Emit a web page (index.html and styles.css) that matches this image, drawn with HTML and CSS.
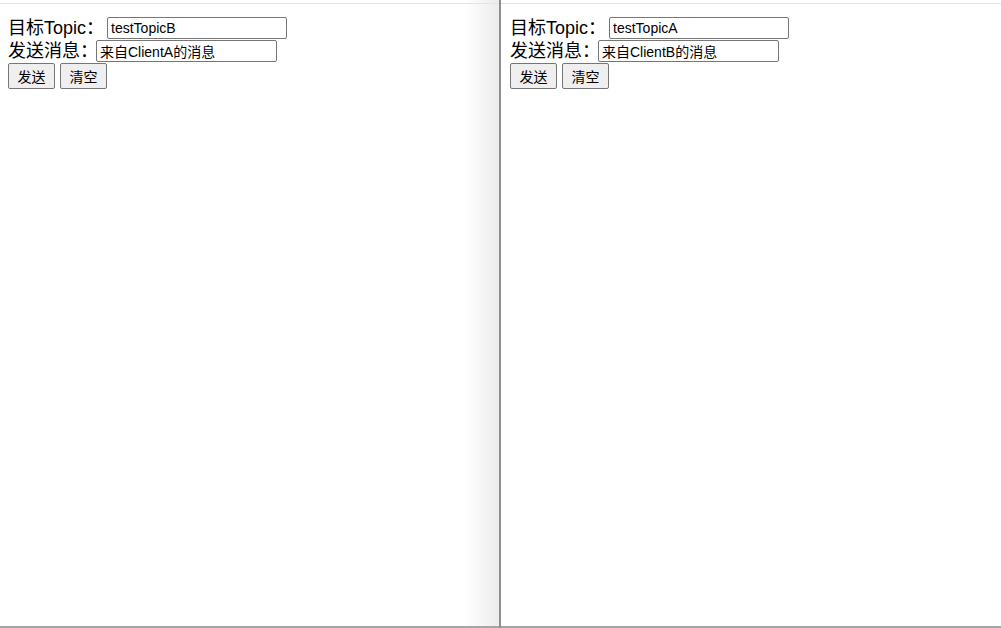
FILE: index.html
```html
<!DOCTYPE html>
<html lang="zh-CN">
<head>
<meta charset="utf-8">
<title>Topic</title>
<link rel="stylesheet" href="styles.css">
</head>
<body>
<div class="frames">
  <section class="pane pane-left">
    <div class="doc">
      <div class="row row-first"><span class="label label-topic">目标Topic：</span><input class="field field-topic" type="text" value="testTopicB"></div>
      <div class="row"><span class="label label-msg">发送消息：</span><input class="field field-msg" type="text" value="来自ClientA的消息"></div>
      <div class="row buttons"><button class="btn">发送</button><button class="btn">清空</button></div>
    </div>
  </section>
  <div class="divider"></div>
  <section class="pane pane-right">
    <div class="doc">
      <div class="row row-first"><span class="label label-topic">目标Topic：</span><input class="field field-topic" type="text" value="testTopicA"></div>
      <div class="row"><span class="label label-msg">发送消息：</span><input class="field field-msg" type="text" value="来自ClientB的消息"></div>
      <div class="row buttons"><button class="btn">发送</button><button class="btn">清空</button></div>
    </div>
  </section>
</div>
</body>
</html>
```
FILE: styles.css
```css
html, body {
  margin: 0;
  padding: 0;
  background: #fff;
}
body {
  font-family: "Liberation Sans", "Noto Sans CJK SC", sans-serif;
  color: #000;
}
.frames {
  display: flex;
  height: 628px;
  width: 1001px;
  overflow: hidden;
}
.pane {
  padding-top: 3px;
  box-sizing: border-box;
  height: 628px;
  display: flex;
  flex-direction: column;
}
.pane-left {
  width: 499px;
  background: linear-gradient(to right, #fff calc(100% - 34px), #ececec);
}
.pane-right {
  flex: 1;
}
.divider {
  width: 2px;
  background: #8e8e8e;
}
.doc {
  flex: 1;
  border-top: 1px solid #e3e3e3;
  border-bottom: 2px solid #a6a6a6;
  padding: 8px 8px 0;
}
.pane-right .doc {
  padding-left: 9px;
}
.row {
  display: flex;
  align-items: center;
  height: 23px;
}
.row-first {
  height: 27px;
  align-items: flex-end;
}
.label {
  font-size: 18px;
  line-height: 22px;
  white-space: nowrap;
}
.label-topic {
  margin-right: 3px;
}
.label-msg {
  margin-right: -2px;
}
.field {
  font-family: "Liberation Sans", "Noto Sans CJK SC", sans-serif;
  font-size: 14px;
  height: 22px;
  box-sizing: border-box;
  border: 1px solid #767676;
  border-radius: 2px;
  padding: 1px 3px;
  margin: 0;
  background: #fff;
  color: #000;
}
.field-topic { width: 180px; }
.field-msg { width: 181px; }
.buttons {
  height: 27px;
  gap: 5px;
}
.btn {
  font-family: "Liberation Sans", "Noto Sans CJK SC", sans-serif;
  font-size: 14px;
  height: 26px;
  width: 47px;
  padding: 0;
  margin: 0;
  border: 1px solid #767676;
  border-radius: 2px;
  background: #efefef;
  color: #000;
}
```
